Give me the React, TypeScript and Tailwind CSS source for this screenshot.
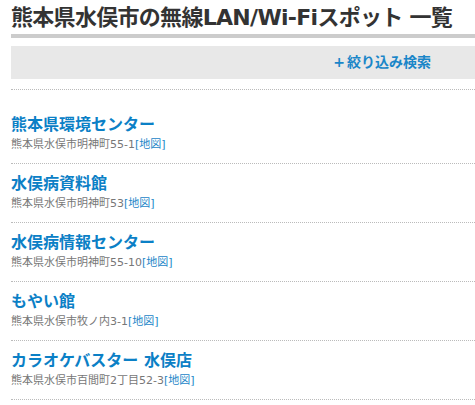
import React from 'react';

const SPOTS = [
    { name: '熊本県環境センター', address: '熊本県水俣市明神町55-1' },
    { name: '水俣病資料館', address: '熊本県水俣市明神町53' },
    { name: '水俣病情報センター', address: '熊本県水俣市明神町55-10' },
    { name: 'もやい館', address: '熊本県水俣市牧ノ内3-1' },
    { name: 'カラオケバスター 水俣店', address: '熊本県水俣市百間町2丁目52-3' },
];

export default function App() {
    return (
        <div
            className="w-[475px] h-[405px] overflow-hidden bg-white pl-[11px]"
            style={{ fontFamily: '"DejaVu Sans", "Noto Sans CJK JP", sans-serif' }}
        >
            {/* Heading */}
            <h1 className="pt-[4px] pb-[2px] text-[22px] leading-[28px] font-bold text-[#333] tracking-[-0.7px] whitespace-nowrap border-b-[4px] border-[#ccc]">
                熊本県水俣市の無線LAN/Wi-Fiスポット 一覧
            </h1>

            {/* Filter bar */}
            <div className="mt-[8px] h-[33px] bg-[#e8e8e8] flex items-center justify-end pr-[44px]">
                <a className="text-[14px] font-bold text-[#1a86c8] cursor-pointer">
                    <span className="mr-[2px]">+</span>絞り込み検索
                </a>
            </div>

            {/* Spot list */}
            <ul className="mt-[10px] border-t border-dotted border-[#bbb]">
                {SPOTS.map((spot, i) => (
                    <li
                        key={spot.name}
                        className={`border-b border-dotted border-[#bbb] pb-[10px] ${i === 0 ? 'pt-[24px]' : 'pt-[9px]'}`}
                    >
                        <div className="text-[16px] leading-[22px] font-bold text-[#0b80c6]">{spot.name}</div>
                        <div className="text-[11px] leading-[17px] text-[#777]">
                            {spot.address}
                            <a className="text-[#1a86c8] cursor-pointer">[地図]</a>
                        </div>
                    </li>
                ))}
            </ul>
        </div>
    );
}
